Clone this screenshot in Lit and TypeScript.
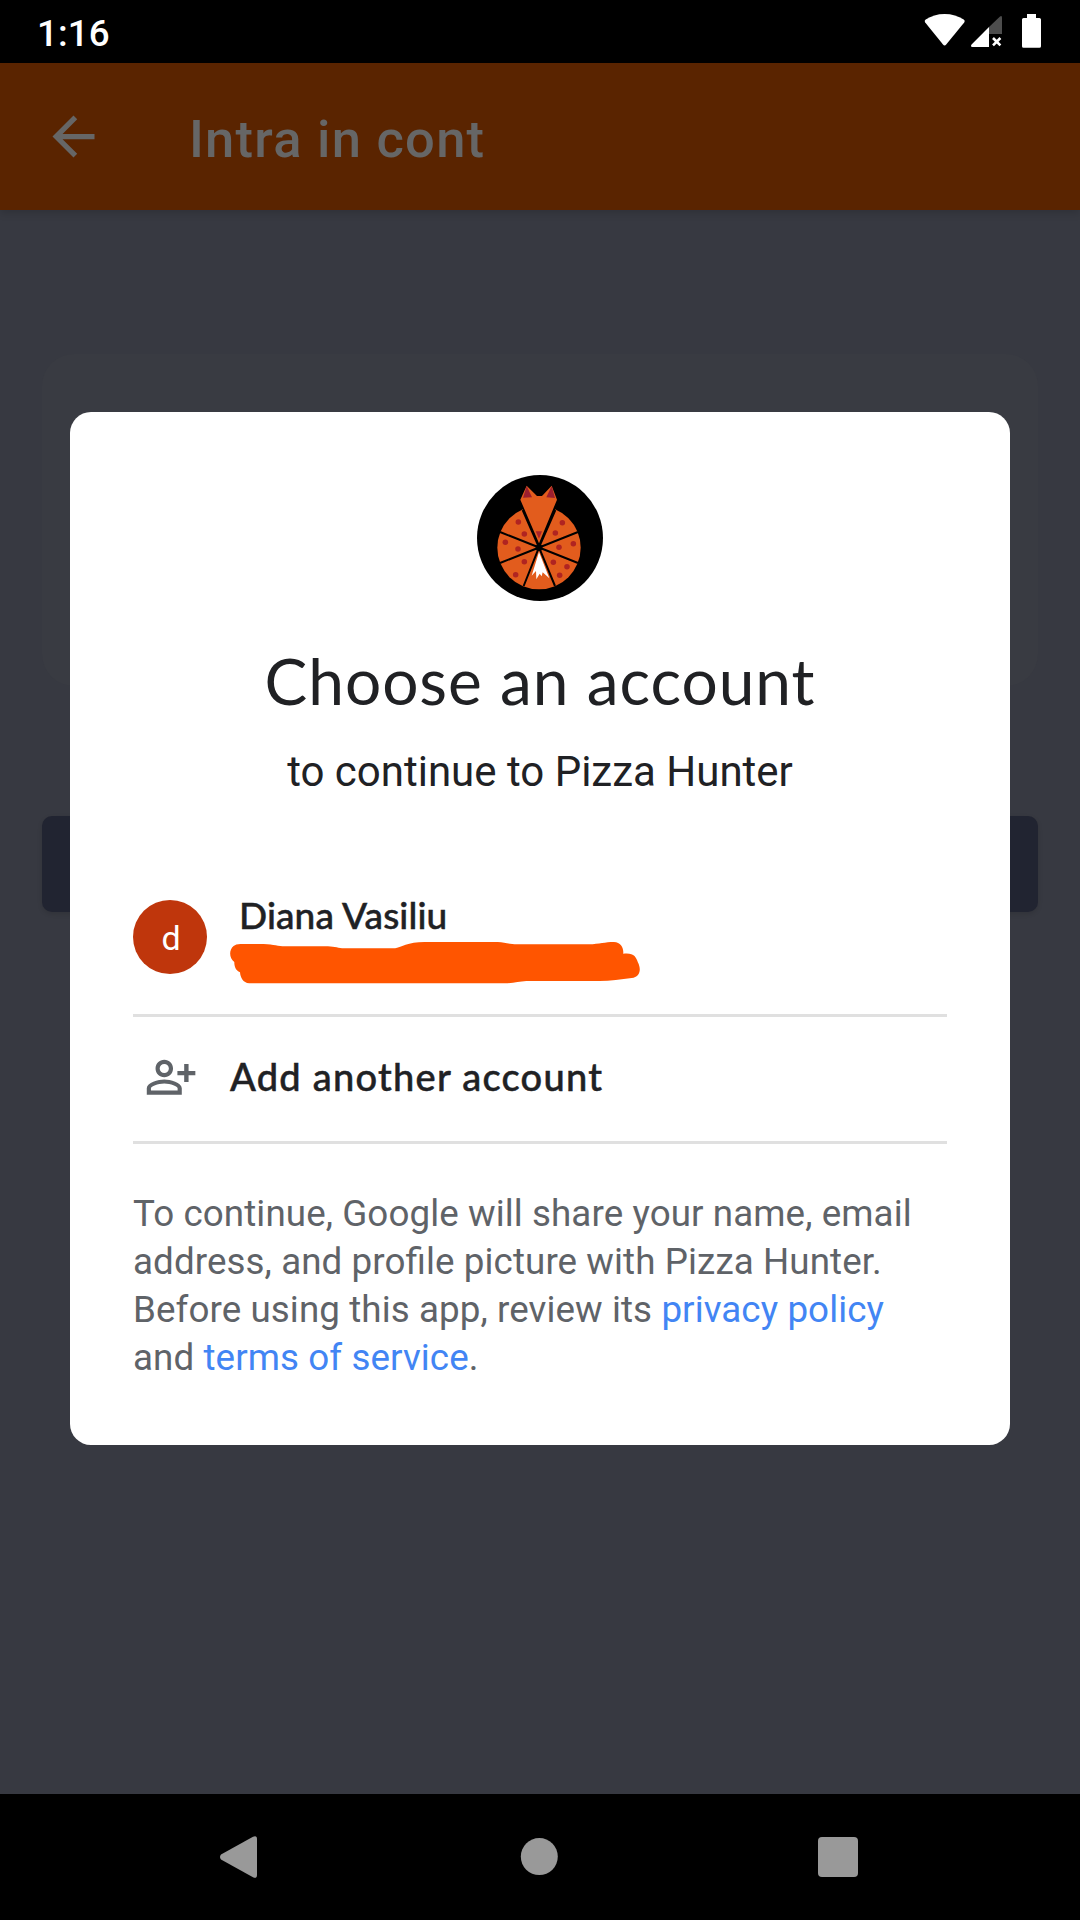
import { LitElement, html, svg, css } from "lit";
import { customElement } from "lit/decorators.js";

// Pepperoni centres on the pizza logo.
const TOPPINGS = [
  [175, 186], [193, 222], [136, 247], [174, 267], [193, 305], [167, 344],
  [307, 188], [286, 219], [340, 251], [297, 262], [280, 307], [321, 320], [299, 346],
];

@customElement("status-bar")
class StatusBar extends LitElement {
  static styles = css`
    :host { display: flex; height: 63px; background: #000; color: #fff; }
    .time { flex: 1; padding-left: 37px; font: 500 36.75px/68px Roboto, sans-serif; letter-spacing: 0.1px; }
    .icons { width: 180px; height: 63px; }
  `;
  render() {
    return html`
      <div class="time">1:16</div>
      <svg class="icons" viewBox="0 0 180 63" fill="#fff">
        <path d="M25.2 22.4C24.4 21.4 24.6 20.4 25.7 19.6C31 16 37.5 14 44.6 14C51.7 14 58.4 16 63.7 19.6C64.8 20.4 65 21.4 64.2 22.4L46.2 44.6C45.2 45.8 44 45.8 43 44.6Z" />
        <path d="M89 27V47H72.4Q70 46.4 71.6 44.4Z" />
        <path fill="#4d4d4d" d="M89 27L100 16.4Q102 15 102 17.5V34H89Z" />
        <path d="M93 38L100.4 45.4M100.4 38L93 45.4" stroke="#fff" stroke-width="2.6" />
        <path d="M127 14H136V18H139.4Q141 18 141 19.6V46.2Q141 47.8 139.4 47.8H123.6Q122 47.8 122 46.2V19.6Q122 18 123.6 18H127Z" />
      </svg>
    `;
  }
}

@customElement("nav-bar")
class NavBar extends LitElement {
  static styles = css`
    :host { display: block; height: 126px; background: #000; }
    .keys { display: block; width: 1080px; height: 126px; }
  `;
  render() {
    return html`
      <svg class="keys" viewBox="0 0 1080 126" fill="#999">
        <path d="M221 60.6L253 42.7Q257 41 257 45V81Q257 85 253 83.3L221 65.4Q219 63 221 60.6Z" />
        <circle cx="539.3" cy="62.6" r="18.5" />
        <rect x="818" y="43" width="40" height="40" rx="4" />
      </svg>
    `;
  }
}

@customElement("account-dialog")
class AccountDialog extends LitElement {
  static styles = css`
    :host {
      box-sizing: border-box; display: block; width: 940px; height: 1033px;
      padding: 63px 63px 0; border-radius: 21px; background: #fff; color: #202124;
      font-family: Roboto, sans-serif;
    }
    .logo { display: block; width: 126px; height: 126px; margin: 0 auto; }
    .title {
      margin: 42px 0 0; text-align: center; white-space: nowrap;
      font: 400 64px/76px Lato, sans-serif; letter-spacing: 0.95px;
    }
    .subtitle { margin: 28px 0 0; text-align: center; font: 400 42px/50px Roboto, sans-serif; letter-spacing: 0; }
    .row { box-sizing: border-box; display: flex; align-items: flex-start; border-bottom: 3px solid #e0e0e0; }
    .account { height: 157px; margin-top: 63px; padding-top: 33px; }
    .avatar {
      width: 74px; height: 74px; margin: 7px 23px 0 0; border-radius: 50%;
      background: #bf360c; color: #fff; text-align: center; text-indent: 2px; font: 400 34px/76px Roboto, sans-serif;
    }
    .who { display: flex; flex-direction: column; gap: 5px; }
    .name, .label { font: 500 37px/44px Lato, sans-serif; -webkit-text-stroke: 0.5px #202124; }
    .name { padding-left: 9px; letter-spacing: 0.1px; }
    .mark { display: block; width: 410px; height: 42px; }
    .add { height: 127px; padding-top: 37px; }
    .person { width: 60px; height: 52.5px; margin: -3px 32.5px 0 4.5px; }
    .label { font-size: 38px; letter-spacing: 1.25px; }
    .legal {
      margin: 46px 0 0; color: #5f6368; font-size: 36.75px; line-height: 48px; white-space: nowrap;
      letter-spacing: 0.09px; font-feature-settings: "liga" 1;
    }
    .link { color: #4285f4; text-decoration: none; }
  `;
  render() {
    return html`
      <svg class="logo" viewBox="51 45 378 378">
        <circle cx="240" cy="234" r="189" fill="#000" />
        <circle cx="237" cy="263" r="125" fill="#e25c1d" />
        <path d="M237 262L168 100H306Z" fill="#000" />
        <path d="M237 262L188 150M237 262L286 150M120 216L354 309M354 216L120 309M191 378L237 262L285 378" stroke="#000" stroke-width="6" fill="none" />
        <path d="M237 250L181 119L200 77L231 108H246L275 77L291 119Z" fill="#e25c1d" />
        <path d="M189 113L200 78L216 112ZM259 112L275 78L285 114Z" fill="#9c1f2f" />
        <path d="M227 214H246L237 236Z" fill="#a8232b" />
        ${TOPPINGS.map(([x, y]) => svg`<circle cx=${x} cy=${y} r="8.3" fill="#b02421" />`)}
        <path d="M237 276L268 355L248 337L245 349L239 341L229 358L228 333L215 347Z" fill="#fff" />
        <circle cx="237" cy="263" r="10" fill="#000" />
      </svg>
      <h1 class="title">Choose an account</h1>
      <p class="subtitle">to continue to Pizza Hunter</p>
      <div class="row account">
        <div class="avatar">d</div>
        <div class="who">
          <div class="name">Diana Vasiliu</div>
          <svg class="mark" viewBox="336 186 1147 126" preserveAspectRatio="none">
            <path fill="#ff5500" d="M365 192H430C460 193 470 199 490 199H610C630 200 640 205 655 205H798C812 202 835 186 880 186L1085 186C1105 187 1115 193 1140 193H1340C1370 192 1385 186 1410 186C1430 186 1438 205 1436 221C1465 217 1472 230 1477 247C1488 270 1482 290 1460 294C1430 297 1400 303 1370 303H1165C1145 304 1130 310 1105 310H390C372 309 365 292 364 277C352 271 348 260 348 246C334 236 332 210 346 198Q352 192 365 192Z" />
          </svg>
        </div>
      </div>
      <div class="row add">
        <svg class="person" viewBox="0 0 27.4 24" fill="#5f6368">
          <path d="M12 5.9a2.1 2.1 0 1 1 0 4.2 2.1 2.1 0 0 1 0-4.2m0 9c2.97 0 6.1 1.46 6.1 2.1v1.1H5.9V17c0-.64 3.13-2.1 6.1-2.1M12 4C9.79 4 8 5.79 8 8s1.79 4 4 4 4-1.79 4-4-1.79-4-4-4zm0 9c-2.67 0-8 1.34-8 4v3h16v-3c0-2.66-5.33-4-8-4z" />
          <path d="M21.1 5.9h2v3.2h3.1v2h-3.1v3.1h-2v-3.1H18v-2h3.1z" />
        </svg>
        <div class="label">Add another account</div>
      </div>
      <p class="legal">
        To continue, Google will share your name, email<br />address, and profile picture with Pizza Hunter.<br />Before using this app, review its <a class="link">privacy policy</a><br />and <a class="link">terms of service</a>.
      </p>
    `;
  }
}

@customElement("app-root")
class AppRoot extends LitElement {
  static styles = css`
    :host { display: flex; flex-direction: column; width: 1080px; height: 1920px; overflow: hidden; background: #373941; }
    .appbar {
      display: flex; align-items: center; height: 147px; padding-left: 42px; gap: 84px;
      background: #5a2400; color: #666; box-shadow: 0 3px 8px rgba(0, 0, 0, 0.15);
    }
    .back { width: 63px; height: 63px; }
    .heading { margin: 4px 0 0; font: 500 52.5px/60px Roboto, sans-serif; letter-spacing: 1.25px; }
    .content { position: relative; flex: 1; display: flex; flex-direction: column; gap: 130px; padding: 144px 42px 0; }
    .form { height: 332px; border-radius: 32px; background: #393b42; }
    .button { height: 96px; border-radius: 10px; background: #212431; box-shadow: 0 2px 5px rgba(0, 0, 0, 0.12); }
    .dialog { position: absolute; left: 70px; top: 202px; }
  `;
  render() {
    return html`
      <status-bar></status-bar>
      <header class="appbar">
        <svg class="back" viewBox="0 0 24 24" fill="#666"><path d="M20 11H7.83l5.59-5.59L12 4l-8 8 8 8 1.41-1.41L7.83 13H20v-2z" /></svg>
        <h1 class="heading">Intra in cont</h1>
      </header>
      <main class="content">
        <div class="form"></div>
        <div class="button"></div>
        <account-dialog class="dialog"></account-dialog>
      </main>
      <nav-bar></nav-bar>
    `;
  }
}
